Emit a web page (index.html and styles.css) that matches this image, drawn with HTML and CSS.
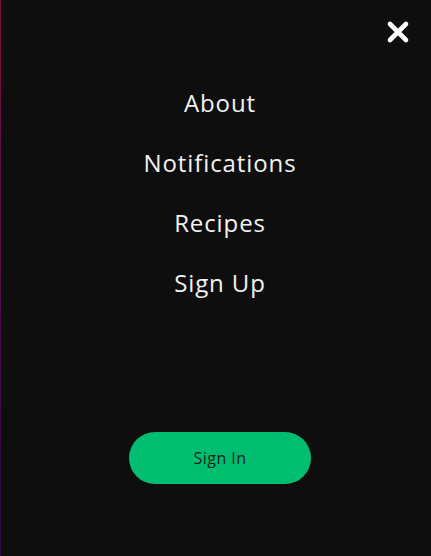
FILE: index.html
```html
<!DOCTYPE html>
<html lang="en">
<head>
<meta charset="utf-8">
<title>Menu</title>
<link rel="stylesheet" href="styles.css">
</head>
<body>
<div class="panel">
  <header class="top">
    <button class="close" aria-label="Close">
      <svg width="24" height="24" viewBox="0 0 24 24"><path d="M4 4 L20 20 M20 4 L4 20" stroke="#fff" stroke-width="4.6" stroke-linecap="round"/></svg>
    </button>
  </header>
  <nav class="menu">
    <a href="#">About</a>
    <a href="#">Notifications</a>
    <a href="#">Recipes</a>
    <a href="#">Sign Up</a>
  </nav>
  <div class="actions">
    <button class="signin">Sign In</button>
  </div>
</div>
</body>
</html>
```
FILE: styles.css
```css
html, body {
  margin: 0;
  padding: 0;
  height: 100%;
  background: #0e0e0e;
}
body {
  font-family: "Open Sans", "Noto Sans", sans-serif;
}
.panel {
  box-sizing: border-box;
  height: 556px;
  padding-left: 8px;
  border-left: 1px solid transparent;
  border-image: linear-gradient(to bottom, #7a1038, #4a0c4a 60%, #2a0a40) 1;
  display: flex;
  flex-direction: column;
}
.top {
  display: flex;
  justify-content: flex-end;
  padding: 20px 21px 0 0;
}
.close {
  background: none;
  border: 0;
  padding: 0;
  width: 24px;
  height: 24px;
  cursor: pointer;
}
.close svg { display: block; }
.menu {
  display: flex;
  flex-direction: column;
  align-items: center;
  gap: 27px;
  margin-top: 42px;
}
.menu a {
  color: #f2f2f2;
  text-decoration: none;
  font-size: 24px;
  line-height: 33px;
  letter-spacing: 0.9px;
}
.actions {
  display: flex;
  justify-content: center;
  margin-top: 133px;
}
.signin {
  width: 182px;
  height: 52px;
  border: 0;
  border-radius: 26px;
  background: #00be70;
  color: #0c2419;
  font-family: inherit;
  font-size: 16px;
  letter-spacing: 0.5px;
  cursor: pointer;
}
```
